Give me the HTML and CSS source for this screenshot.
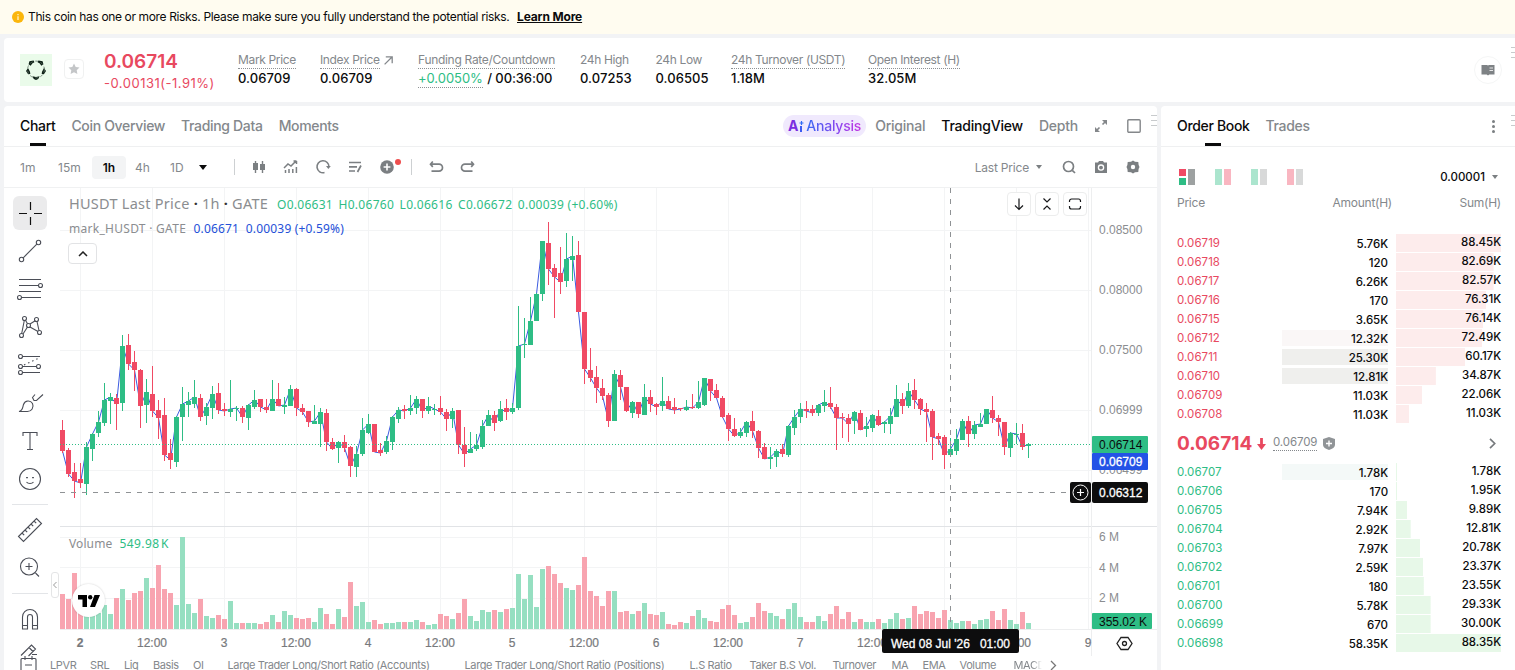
FILE: index.html
```html
<!DOCTYPE html>
<html lang="en">
<head>
<meta charset="UTF-8">
<meta name="viewport" content="width=device-width">
<title>HUSDT Perpetual</title>
<link rel="stylesheet" href="styles.css">
</head>
<body>
<div class="notice">
	<svg width="12" height="12" viewBox="0 0 12 12"><circle cx="6" cy="6" r="6" fill="#fbb60c"/><path d="M6 5.2V9M6 3v1.3" stroke="#fff3c9" stroke-width="1.3"/></svg>
	<span class="notice-text">This coin has one or more Risks. Please make sure you fully understand the potential risks.</span>
	<a class="notice-link">Learn More</a>
</div>

<div class="panel ticker">
	<div class="coin">
		<svg width="32" height="32" viewBox="0 0 32 32" fill="#0c1f14">
			<path d="M8.600 10.200l.8-3 4.200-.8.8 1.800-2.200 1.200-1.500 2.400zM23.400 10.200l-.8-3-4.200-.8-.8 1.800 2.200 1.200 1.500 2.400zM6 17l2-3 2 3.800.3 2.200-2.200.3zM26 17l-2-3-2 3.800-.3 2.200 2.200.3zM12.400 22.200l3.600.8 3.600-.8-1.400 2.700-2.200 1-2.200-1z"/>
			<circle cx="16" cy="15.500" r="8.400" fill="none" stroke="#5f7567" stroke-width=".8" stroke-dasharray="3 2.500"/>
		</svg>
	</div>
	<div class="fav"><svg width="12" height="12" viewBox="0 0 12 12"><path d="M6 .5l1.700 3.500 3.800.5-2.800 2.700.7 3.800L6 9.200 2.600 11l.7-3.800L.5 4.500 4.300 4z" fill="#c4c6c8"/></svg></div>
	<div class="last">
		<div class="last-price">0.06714</div>
		<div class="last-change">-0.00131(-1.91%)</div>
	</div>
	<div class="stats">
		<div class="stat"><span class="lbl dot">Mark Price</span><span class="val">0.06709</span></div>
		<div class="stat"><span class="lbl"><span class="lbl dot">Index Price</span> <svg width="9" height="9" viewBox="0 0 9 9" fill="none" stroke="#84888c" stroke-width="1.300"><path d="M.6 8.400L8 1M1.800.8h6.400v6.400"/></svg></span><span class="val">0.06709</span></div>
		<div class="stat"><span class="lbl dot">Funding Rate/Countdown</span><span class="val"><span class="up dot">+0.0050%</span> <span class="slash">/ 00:36:00</span></span></div>
		<div class="stat"><span class="lbl">24h High</span><span class="val">0.07253</span></div>
		<div class="stat"><span class="lbl">24h Low</span><span class="val">0.06505</span></div>
		<div class="stat"><span class="lbl dot">24h Turnover (USDT)</span><span class="val">1.18M</span></div>
		<div class="stat"><span class="lbl dot">Open Interest (H)</span><span class="val">32.05M</span></div>
	</div>
	<div class="book-btn"><svg width="14" height="12" viewBox="0 0 14 12"><path d="M.5 1H6l1 .6L8 1h5.500v9.500H8.300L7 11.600 5.700 10.500H.5z" fill="#7e8285"/><path d="M8.500 4H12M8.500 6.500H12" stroke="#e5e6e7"/></svg></div>
	<i class="grip"></i>
</div>

<div class="columns">
	<div class="panel chart-panel">
		<div class="tabs">
			<div class="tab on">Chart</div><div class="tab">Coin Overview</div><div class="tab">Trading Data</div><div class="tab">Moments</div>
			<div class="tabs-right">
				<span class="ai"><b>A</b><svg width="7" height="11" viewBox="0 0 7 11"><path d="M3 5v6" stroke="#3c5cf2" stroke-width="2"/><path d="M3.500 0v4M1.500 2h4" stroke="#2f6bf5" stroke-width="1.200"/></svg><span class="ai-text">Analysis</span></span>
				<span>Original</span><span class="sel">TradingView</span><span>Depth</span>
				<svg width="14" height="14" viewBox="0 0 14 14"><path d="M8.500 5.500l3-3M5.500 8.500l-3 3" stroke="#84878a" stroke-width="1.600"/><path d="M8 1h5v5zM1 8v5h5z" fill="#84878a"/></svg>
				<svg width="14" height="14" viewBox="0 0 14 14"><rect x=".8" y=".8" width="12.400" height="12.400" rx="1" fill="none" stroke="#84878a" stroke-width="1.400"/></svg>
			</div>
			<i class="grip"></i>
		</div>

		<div class="tools">
			<div class="frames"><span>1m</span><span>15m</span><span class="on">1h</span><span>4h</span><span>1D</span><i class="caret big"></i></div>
			<i class="bar"></i>
			<div class="tool-icons">
				<svg viewBox="0 0 16 16"><path d="M4.500 2v12M11.500 2v12" stroke="#7b7f82" stroke-width="1.400"/><path d="M2 4h5v7H2zM9 5h5v6H9z" fill="#7b7f82"/></svg>
				<svg viewBox="0 0 16 16" fill="none" stroke="#7b7f82" stroke-width="1.500"><path d="M1 9l4-4 3 2 5-5M13.500 2v3M10.500 2h3M2.500 11v3M6 10v4M9.800 10v4M13.400 8v6"/></svg>
				<svg viewBox="0 0 16 16" fill="none" stroke="#7b7f82" stroke-width="1.600"><path d="M9.500 13.600A6 6 0 1 1 14 8"/><path d="M11 7h4.800l-2.400 3z" fill="#7b7f82" stroke="none"/></svg>
				<svg viewBox="0 0 16 16" fill="none" stroke="#7b7f82" stroke-width="1.700"><path d="M2 3.500h12M2 7.800h8M2 12h6M14 6.500L10.500 13"/></svg>
				<svg viewBox="0 0 16 16"><circle cx="8" cy="8" r="6.800" fill="#7b7f82"/><path d="M8 4.600v6.800M4.600 8h6.800" stroke="#fff" stroke-width="1.600"/></svg>
			</div>
			<i class="red-dot"></i>
			<i class="bar"></i>
			<div class="tool-icons">
				<svg viewBox="0 0 16 16" fill="none" stroke="#7b7f82" stroke-width="1.700"><path d="M4.800 2.500L2.500 5.200 4.800 7.900M2.800 5.200H11a3.500 3.500 0 0 1 0 7H3.500"/></svg>
				<svg viewBox="0 0 16 16" fill="none" stroke="#7b7f82" stroke-width="1.700"><path d="M11.200 2.500l2.300 2.700-2.300 2.700M13.200 5.200H5a3.500 3.500 0 0 0 0 7h7.500"/></svg>
			</div>
			<div class="tools-right">
				<span>Last Price</span><i class="caret"></i>
				<svg viewBox="0 0 16 16" fill="none" stroke="#7b7f82" stroke-width="1.700"><circle cx="7.500" cy="7.500" r="5"/><path d="M11.300 11.300L14 14"/></svg>
				<svg viewBox="0 0 16 16"><path d="M2 3.500h3L6 2h4l1 1.500h3V14H2z" fill="#7b7f82"/><circle cx="8" cy="8.600" r="2.600" fill="none" stroke="#fff" stroke-width="1.300"/></svg>
				<svg viewBox="0 0 16 16"><path d="M8 1.500l2 1.300 3.300.2.300 3 .9 2-.9 2-.3 3-3.300.2L8 14.500l-2-1.300L2.700 13l-.3-3-.9-2 .9-2 .3-3 3.300-.2z" fill="#7b7f82"/><circle cx="8" cy="8" r="2.200" fill="#fff"/></svg>
			</div>
		</div>

		<div class="chart-body">
			<div class="draw-bar">
				<div class="dt sel"><svg viewBox="0 0 28 28"><path d="M14.500 3v8M14.500 18v8M3 14.500h8M18 14.500h8" stroke="#111" stroke-width="1.200"/></svg></div>
				<div class="dt"><svg viewBox="0 0 28 28"><circle cx="5.500" cy="22.500" r="2.200"/><circle cx="22.500" cy="5.500" r="2.200"/><path d="M7.200 20.800L20.800 7.200"/></svg></div>
				<div class="dt"><svg viewBox="0 0 28 28"><path d="M3 4.500h22M3 10.500h19.800M3 16.500h22M5.500 22.500H25"/><circle cx="24.500" cy="10.500" r="2"/><circle cx="3.500" cy="22.500" r="2"/></svg></div>
				<div class="dt"><svg viewBox="0 0 28 28"><circle cx="8.500" cy="5.500" r="2"/><circle cx="5.500" cy="22.500" r="2"/><circle cx="20.500" cy="6.500" r="2"/><circle cx="23.500" cy="19.500" r="2"/><circle cx="12.500" cy="12.500" r="2"/><path d="M8.300 7.500l-2.600 13M9.500 7.300l2 3.500M14 11l5.200-3.200M21 8.500l2 9M14 14l8 4.500M7 21l4.500-7"/></svg></div>
				<div class="dt"><svg viewBox="0 0 28 28"><path d="M6.500 5.500H24M6.500 15.500h14M6.500 21.500H24"/><path d="M8 14l15-7" stroke-dasharray="1.500 3"/><circle cx="4.500" cy="5.500" r="2"/><circle cx="4.500" cy="15.500" r="2"/><circle cx="22.500" cy="15.500" r="2"/><circle cx="4.500" cy="21.500" r="2"/></svg></div>
				<div class="dt"><svg viewBox="0 0 28 28"><path d="M3 22.500c4-1 3.500-4 4.500-7 1.500-4.500 7-4.500 9-1 1.800 4-1 8-5 8zM27 5.500l-6.500 6h-2.500l-1.500-3 2.500-3"/></svg></div>
				<div class="dt"><svg viewBox="0 0 28 28"><path d="M7 9V5.500h14V9M14 5.500v17M11 22.500h6"/></svg></div>
				<div class="dt"><svg viewBox="0 0 28 28"><circle cx="14" cy="14" r="10.500"/><path d="M10.500 17c1.500 2 5.500 2 7 0"/><path d="M11 12v1.200M17 12v1.200" stroke-width="1.800"/></svg></div>
				<i class="rule"></i>
				<div class="dt"><svg viewBox="0 0 28 28"><path d="M2.500 20.500l18-18 5 5-18 18zM6 17l2.200 2.200M9 14l2.200 2.200M12 11l2.200 2.200M15 8l2.200 2.200M18 5l2.200 2.200"/></svg></div>
				<div class="dt"><svg viewBox="0 0 28 28"><circle cx="13" cy="13.500" r="8.500"/><path d="M13 10v7M9.500 13.500h7M19.500 20l3.500 3.500"/></svg></div>
				<i class="rule two"></i>
				<div class="dt"><svg viewBox="0 0 28 28"><path d="M6.500 24V12a7.500 7.500 0 0 1 15 0v12h-5V12a2.500 2.500 0 0 0-5 0v12zM6.500 20.500h5M16.500 20.500h5"/></svg></div>
				<div class="dt"><svg viewBox="0 0 28 28"><path d="M5 13.500L15.500 3l4 4-7 7M16 12.500h5M13 5.500l4 4M6 16.500h13a1 1 0 0 1 1 1V28M6 16.500a1 1 0 0 0-1 1V28M9 14v4M16 14v4M9 23h7"/></svg></div>
			</div>

			<div class="chart-main">
				<svg id="chart" width="1104" height="468" viewBox="53 188 1104 468"></svg>
				<div class="legend">
					<div class="lg1"><span class="nm">HUSDT Last Price <b>·</b> 1h <b>·</b> GATE</span><span class="ohlc"><i>O</i>0.06631</span><span class="ohlc"><i>H</i>0.06760</span><span class="ohlc"><i>L</i>0.06616</span><span class="ohlc"><i>C</i>0.06672</span><span class="ohlc">0.00039 (+0.60%)</span></div>
					<div class="lg2">mark_HUSDT · GATE <span>0.06671&nbsp; 0.00039 (+0.59%)</span></div>
					<div class="fold"><svg width="10" height="6" viewBox="0 0 10 6"><path d="M1 5l4-4 4 4" fill="none" stroke="#222" stroke-width="1.500"/></svg></div>
				</div>
				<div class="vol-legend">Volume <span>549.98&#8202;K</span></div>
				<div class="pane-btns">
					<span><svg viewBox="0 0 14 14"><path d="M7 1.500v11M3 8.500l4 4 4-4"/></svg></span>
					<span><svg viewBox="0 0 14 14"><path d="M3.500 1.500L7 5l3.500-3.500M3.500 12.500L7 9l3.500 3.500"/></svg></span>
					<span><svg viewBox="0 0 14 14"><path d="M1.500 5V4a2 2 0 0 1 2-2h7a2 2 0 0 1 2 2v1M1.500 9v1a2 2 0 0 0 2 2h7a2 2 0 0 0 2-2V9"/></svg></span>
				</div>
				<div class="tv-logo"><svg width="22" height="12" viewBox="0 0 22 12"><path d="M0 0h9v12H4.500V4.500H0zM16.500 0H22l-5 12h-5z"/><circle cx="12.200" cy="2.200" r="2.200"/></svg></div>
				<div class="side-tab"><svg width="4" height="8" viewBox="0 0 4 8"><path d="M3.500 1l-3 3 3 3" fill="none" stroke="#999"/></svg></div>
				<div class="indicators">
					<span>LPVR</span><span>SRL</span><span>Liq</span><span>Basis</span><span>OI</span><span>Large Trader Long/Short Ratio (Accounts)</span><span>Large Trader Long/Short Ratio (Positions)</span><span>L.S Ratio</span><span>Taker B.S Vol.</span><span>Turnover</span><span>MA</span><span>EMA</span><span>Volume</span><span class="fade">MACD</span>
					<svg width="7" height="11" viewBox="0 0 7 11"><path d="M1 1l4.500 4.500L1 10" fill="none" stroke="#777" stroke-width="1.300"/></svg>
				</div>
			</div>
		</div>
	</div>

	<div class="panel book-panel">
		<div class="tabs book-tabs">
			<div class="tab on">Order Book</div><div class="tab">Trades</div>
			<div class="dots"><i></i><i></i><i></i></div>
			<i class="grip"></i>
		</div>
		<div class="book-modes">
			<svg width="16" height="16" viewBox="0 0 16 16"><path d="M0 0h7v7H0z" fill="#f04a64"/><path d="M0 9h7v7H0z" fill="#2ebd85"/><path d="M9 0h7v16H9z" fill="#9da1a1"/></svg>
			<svg width="16" height="16" viewBox="0 0 16 16"><path d="M0 0h7v16H0z" fill="#abe5ce"/><path d="M9 0h7v16H9z" fill="#f9b6c1"/></svg>
			<svg width="16" height="16" viewBox="0 0 16 16"><path d="M0 0h7v16H0z" fill="#abe5ce"/><path d="M9 0h7v16H9z" fill="#d8d9d9"/></svg>
			<svg width="16" height="16" viewBox="0 0 16 16"><path d="M0 0h7v16H0z" fill="#f9b6c1"/><path d="M9 0h7v16H9z" fill="#d8d9d9"/></svg>
			<div class="step">0.00001 <i class="caret"></i></div>
		</div>
		<div class="book-head"><span>Price</span><span>Amount(H)</span><span>Sum(H)</span></div>
		<div id="asks" class="rows asks"></div>
		<div class="mid">
			<span class="mid-price">0.06714</span>
			<svg width="9" height="12" viewBox="0 0 9 12"><path d="M4.500 0v8" stroke="#e8495f" stroke-width="2.800"/><path d="M0 6h9L4.500 12z" fill="#e8495f"/></svg>
			<span class="mid-mark">0.06709</span>
			<svg width="12" height="13" viewBox="0 0 12 13"><path d="M6 0l6 2v6c0 2-2.500 4-6 5-3.500-1-6-3-6-5V2z" fill="#909497"/><path d="M6 3.500v6M3 6.500h6" stroke="#fff" stroke-width="1.400"/></svg>
			<svg class="go" width="7" height="11" viewBox="0 0 7 11"><path d="M1 .8l4.700 4.700L1 10.200" fill="none" stroke="#777b7e" stroke-width="1.700"/></svg>
		</div>
		<div id="bids" class="rows bids"></div>
	</div>
</div>
<script src="chart.js"></script>
</body>
</html>
```
FILE: styles.css
```css
* { box-sizing: border-box; }
body {
	margin: 0;
	width: 1515px;
	height: 670px;
	overflow: hidden;
	background: #f2f3f5;
	font-family: Inter, "Liberation Sans", sans-serif;
	font-size: 12px;
	color: #0b0b0c;
}
i { font-style: normal; }
svg { display: block; flex: none; }
.panel { background: #fff; position: relative; }
.up { color: #2ebd85; }

/* notice */
.notice {
	height: 34px;
	background: #fffcf0;
	display: flex;
	align-items: center;
	padding: 0 0 1px 12px;
}
.notice-text { margin-left: 4px; width: 489px; white-space: nowrap; letter-spacing: -0.36px; }
.notice-link { font-weight: 700; text-decoration: underline; letter-spacing: -0.15px; }

/* ticker */
.ticker {
	margin: 4px 0 0 4px;
	height: 64px;
	border-radius: 4px 0 0 4px;
	display: flex;
	align-items: center;
	padding-left: 16px;
}
.coin { width: 32px; height: 32px; background: #eafbea; }
.fav {
	width: 20px;
	height: 20px;
	margin: -3px 0 0 12px;
	border: 1px solid #f0f1f1;
	border-radius: 4px;
	display: flex;
	align-items: center;
	justify-content: center;
}
.last { width: 134px; margin: 4px 0 0 20px; color: #e8495f; }
.last-price { font-size: 19px; font-weight: 600; line-height: 22px; }
.last-change { font-size: 13px; line-height: 20px; letter-spacing: 0.5px; }
.stats {
	display: grid;
	grid-template-columns: 82px 98px 162px 75.500px 75.500px 137px 120px;
	white-space: nowrap;
}
.stat { display: flex; flex-direction: column; align-items: flex-start; height: 36px; }
.lbl { color: #84888c; font-size: 12px; line-height: 16px; letter-spacing: -0.35px; display: inline-flex; gap: 4px; align-items: center; }
.dot { border-bottom: 1px dotted #8d9194; }
.val { font-size: 13px; line-height: 18px; font-weight: 500; letter-spacing: 0.05px; }
.lbl:not(.dot) + .val { margin-top: 1px; }
.stat:nth-child(2) .val { margin-top: 0; }
.stat:nth-child(3) .lbl { letter-spacing: -0.3px; }
.val .dot { font-weight: 400; display: inline-block; line-height: 17px; letter-spacing: -0.05px; }
.slash { margin-left: 1px; letter-spacing: -0.1px; }
.book-btn {
	width: 28px;
	height: 28px;
	margin-left: auto;
	margin-right: 13px;
	border: 1px solid #f5f6f6;
	border-radius: 50%;
	display: flex;
	align-items: center;
	justify-content: center;
}
/* drag handle on top of the panel corner */
.grip {
	position: absolute;
	top: 9px;
	right: 0;
	width: 6px;
	height: 11px;
	border-top: 1px solid #c8cbcd;
	border-bottom: 1px solid #c8cbcd;
}
.grip::after { content: ""; display: block; margin-top: 4px; border-top: 1px solid #c8cbcd; }
.ticker .grip { right: -2px; }
.book-tabs .grip { right: -2px; }

/* columns */
.columns { display: flex; gap: 4px; margin: 4px 0 0 4px; height: 564px; }
.chart-panel { width: 1153px; border-radius: 4px 4px 0 0; display: flex; flex-direction: column; }
.book-panel { width: 354px; border-radius: 4px 0 0 0; }
.tabs {
	position: relative;
	height: 41px;
	border-bottom: 1px solid #eff0f1;
	display: flex;
	padding-left: 16px;
	gap: 16px;
	font-size: 14px;
	font-weight: 500;
	color: #84888c;
	line-height: 40px;
	white-space: nowrap;
	letter-spacing: -0.33px;
}
.tab.on {
	color: #0b0b0c;
	background: linear-gradient(#0b0b0c, #0b0b0c) center 37px / 16px 3px no-repeat;
}
.tabs-right {
	margin-left: auto;
	margin-right: 16px;
	display: flex;
	align-items: center;
	gap: 16px;
	letter-spacing: -0.22px;
}
.tabs-right .sel { color: #0b0b0c; }
.ai {
	height: 22px;
	line-height: 22px;
	margin-right: -7px;
	padding: 0 5px;
	border-radius: 11px;
	background: #f0e9fd;
	display: flex;
	align-items: center;
}
.ai b { color: #7a2ee0; }
.ai-text {
	margin-left: 1px;
	background: linear-gradient(90deg, #3769f3, #8b45ef 60%, #c436e0);
	-webkit-background-clip: text;
	background-clip: text;
	color: transparent;
}
.tabs-right svg + svg { margin-left: 3px; }

.tools {
	height: 41px;
	border-bottom: 1px solid #f0f1f2;
	display: flex;
	align-items: center;
	padding-left: 16px;
	color: #84888c;
}
.frames {
	display: grid;
	grid-template-columns: 38px 34px 35px 34px 30px 10px;
	align-items: center;
}
.frames .on {
	background: #f3f4f5;
	border-radius: 4px;
	width: 34px;
	height: 23px;
	line-height: 23px;
	text-align: center;
	color: #0b0b0c;
	font-weight: 600;
}
.frames span:nth-child(4) { padding-left: 8px; }
.frames span:nth-child(5) { padding-left: 9px; }
.caret { display: inline-block; border: 3px solid transparent; border-top: 4px solid #7b7f82; border-bottom: 0; }
.caret.big { border-width: 5px 4px 0; border-top-color: #0b0b0c; margin-left: 8px; width: 8px; }
.bar { width: 1px; height: 16px; background: #cdd0d2; }
.frames + .bar { margin-left: 33px; }
.tool-icons { display: flex; gap: 16px; margin-left: 16px; }
.tool-icons svg, .tools-right svg { width: 16px; height: 16px; }
.red-dot { width: 6px; height: 6px; border-radius: 50%; background: #ee4d4d; margin: -11px 10px 0 0; }
.tools-right { margin-left: auto; margin-right: 16px; display: flex; align-items: center; gap: 16px; letter-spacing: -0.2px; }
.tools-right .caret { margin: 0 3px 0 -9px; }

/* drawing tools */
.chart-body { display: flex; flex: 1; min-height: 0; overflow: hidden; }
.draw-bar {
	width: 49px;
	padding: 8px 0 0 9px;
	display: flex;
	flex-direction: column;
}
.dt {
	width: 34px;
	height: 34px;
	margin-bottom: 4px;
	border-radius: 6px;
	display: flex;
	align-items: center;
	justify-content: center;
	flex: none;
}
.dt.sel { background: #ebebec; }
.dt svg { width: 28px; height: 28px; fill: none; stroke: #4b4e57; stroke-width: 1.1; }
.rule { width: 36px; height: 1px; margin: 4px 0 8px -1px; background: #e3e5e8; flex: none; }
.rule + .dt { margin-bottom: 3px; }
.rule.two { margin: 5px 0 8px -1px; }

/* chart */
.chart-main { position: relative; width: 1104px; font-family: "Noto Sans", "Open Sans", sans-serif; }
.candle-text { font-family: "Liberation Sans", Arial, sans-serif; font-size: 12px; }
.legend { position: absolute; left: 16px; top: 4px; color: #8b8d90; white-space: nowrap; }
.lg1 { display: flex; align-items: baseline; font-size: 13px; line-height: 22px; }
.nm { font-size: 14.5px; width: 208px; letter-spacing: 0.25px; }
.nm b { color: #333; }
.ohlc { color: #2ebd85; font-size: 12px; margin-right: 5.5px; letter-spacing: 0.28px; }
.lg2 { font-size: 12px; line-height: 18px; margin-top: 4px; letter-spacing: 0.28px; }
.lg2 span { color: #2450d8; margin-left: 4px; letter-spacing: 0.18px; }
.fold {
	width: 29px;
	height: 21px;
	margin-top: 5px;
	margin-left: -1px;
	border: 1px solid #e2e3e5;
	border-radius: 4px;
	background: #fff;
	display: flex;
	align-items: center;
	justify-content: center;
}
.vol-legend { position: absolute; left: 16px; top: 347px; color: #8b8d90; font-size: 12px; line-height: 18px; letter-spacing: 0.1px; }
.vol-legend span { color: #2ebd85; margin-left: 4px; letter-spacing: 0.4px; }
.pane-btns { position: absolute; left: 954px; top: 4px; display: flex; gap: 4px; }
.pane-btns span {
	width: 24px;
	height: 24px;
	border: 1px solid #eceded;
	border-radius: 4px;
	background: #fff;
	display: flex;
	align-items: center;
	justify-content: center;
}
.pane-btns svg { width: 14px; height: 14px; fill: none; stroke: #17181a; stroke-width: 1.2; }
.tv-logo {
	position: absolute;
	left: 19px;
	top: 396px;
	width: 33px;
	height: 33px;
	border-radius: 50%;
	background: #fff;
	box-shadow: 0 0 2px rgba(0, 0, 0, 0.2);
	display: flex;
	align-items: center;
	justify-content: center;
}
.side-tab {
	position: absolute;
	left: -2px;
	top: 384px;
	width: 8px;
	height: 26px;
	border: 1px solid #e4e5e6;
	border-radius: 3px;
	background: #fff;
	display: flex;
	align-items: center;
	justify-content: center;
}
.indicators {
	display: grid;
	grid-template-columns: 40px 34px 29px 40px 34.500px 237px 225px 60px 83px 59px 31px 37px 54px 36px 8px;
	margin-left: -3px;
	padding-top: 2px;
	font: 11px/14px Inter, "Liberation Sans", sans-serif;
	letter-spacing: -0.38px;
	color: #84888c;
	white-space: nowrap;
}
.indicators .fade {
	width: 28px;
	overflow: hidden;
	-webkit-mask-image: linear-gradient(90deg, #000 65%, transparent);
	mask-image: linear-gradient(90deg, #000 65%, transparent);
}
.indicators svg { margin-top: 2px; }

/* order book */
.dots { margin-left: auto; margin-right: 20px; display: flex; flex-direction: column; gap: 2px; justify-content: center; }
.dots i { width: 3px; height: 3px; border-radius: 50%; background: #7b7f82; }
.book-modes { display: flex; gap: 20px; padding: 22px 17px 0 18px; align-items: center; }
.step { margin-left: auto; font-weight: 500; font-size: 11.5px; }
.step .caret { margin: 0 0 2px 4px; }
.book-head {
	display: grid;
	grid-template-columns: 100px 115px 109px;
	padding: 10px 0 0 16px;
	line-height: 16px;
	letter-spacing: -0.25px;
	color: #84888c;
}
.book-head span + span, .row span + span { text-align: right; }
.asks { margin-top: 23px; }
.row {
	display: grid;
	grid-template-columns: 105px 106px 8px 105px;
	padding-left: 16px;
	height: 19px;
	font-size: 11.5px;
	font-weight: 500;
}
.row .price { letter-spacing: 0.05px; line-height: 19px; font-weight: 400; }
.row .amount { grid-column: 2; height: 16px; margin: 1px 0 2px; line-height: 18px; letter-spacing: -0.05px; }
.row .sum { grid-column: 4; height: 18px; line-height: 17px; letter-spacing: -0.05px; background-repeat: no-repeat; }
.asks .price { color: #e8495f; }
.bids .price { color: #2ebd85; }
.asks .sum { background-image: linear-gradient(#fdecec, #fdecec); }
.bids .sum { background-image: linear-gradient(#e7f8e8, #e7f8e8); }
.amount.red { background: #faf7f7; }
.amount.grey { background: #efefed; }
.amount.green { background: #f4f9f8; }
.mid { height: 39px; display: flex; align-items: center; padding: 0 19px 0 16px; }
.mid-price { width: 80px; font-size: 19px; font-weight: 700; color: #e8495f; }
.mid-mark { margin: -3px 6px 0 7px; font-size: 11.5px; letter-spacing: -0.1px; color: #84888c; border-bottom: 1px dotted #84888c; line-height: 16px; }
.go { margin-left: auto; }
```
FILE: chart.js
```js
// one line per candle: direction high top bottom low volume (pixels on the pane)
var candles = [
"R 420 430 451 453 35","R 448 450 474 477 30","R 463 472 481 498 56","R 463 479 483 488 20","G 442 447 484 495 14",
"G 433 434 449 461 14","G 411 422 433 437 16","G 383 400 423 426 24","G 393 397 401 424 15","R 394 398 404 430 31",
"G 335 346 403 411 40","R 334 345 364 370 29","R 351 362 370 391 36","R 369 370 406 428 38","G 379 392 405 423 51",
"R 366 394 411 417 41","R 400 410 418 439 64","R 398 415 455 461 40","R 439 453 460 469 36","G 416 417 462 467 24",
"G 387 404 417 441 92","G 392 401 405 417 25","G 380 397 404 408 16","R 394 398 417 421 30","G 403 407 416 425 13",
"G 386 394 408 419 11","R 383 393 410 414 14","R 403 409 411 416 10","G 380 409 412 417 28","G 406 408 409 421 6",
"R 406 408 417 423 6","G 404 405 418 430 6","G 390 400 407 409 6","R 399 399 407 412 5","R 399 407 410 413 7",
"G 380 399 411 411 14","R 383 399 406 406 7","G 397 405 407 414 18","G 385 389 406 406 14","R 388 389 408 416 11",
"R 404 408 412 415 10","R 411 411 422 427 11","G 405 421 424 424 7","G 408 412 424 447 21","R 409 413 442 451 15",
"R 438 442 449 450 5","G 441 442 448 463 20","R 435 442 448 452 12","R 446 447 466 477 47","G 446 454 467 477 23",
"G 418 430 454 456 27","G 414 424 433 434 7","R 424 424 452 452 9","R 443 450 453 456 5","G 436 441 452 454 6",
"G 416 417 442 450 6","G 407 410 419 423 7","R 405 409 411 419 7","G 395 408 411 415 7","G 396 399 408 414 9",
"R 399 399 411 418 7","G 397 406 411 414 4","G 404 409 410 415 5","R 396 408 412 415 15","R 409 412 419 431 13",
"G 408 411 419 428 10","R 410 410 445 454 16","R 427 445 454 467 30","G 432 449 453 453 13","G 434 445 449 451 8",
"G 420 426 447 449 19","G 410 415 426 426 17","R 411 415 423 431 19","G 401 409 421 422 17","R 399 408 412 420 20",
"G 403 408 412 414 21","G 306 346 408 410 55","G 318 344 345 358 30","G 297 321 345 345 54","G 293 294 321 321 22",
"G 241 241 294 301 60","R 222 243 269 285 63","R 264 268 277 318 55","R 247 273 282 294 46","G 233 259 281 287 41",
"G 236 256 260 281 39","R 241 255 312 312 44","R 312 312 369 384 72","R 348 370 378 382 38","R 366 377 388 403 33",
"R 379 388 396 400 23","R 393 395 421 427 38","G 370 374 421 421 38","R 370 375 387 400 17","R 387 387 411 412 18",
"G 401 402 413 418 15","R 402 402 414 418 18","G 384 397 415 415 26","R 390 397 404 412 15","R 403 404 407 415 14",
"G 377 401 406 411 17","R 396 401 409 409 5","R 398 407 410 414 4","R 408 408 409 411 7","G 400 407 410 411 6",
"R 394 407 408 409 13","G 381 402 408 409 19","G 378 378 405 406 11","R 379 379 391 401 8","R 384 390 398 398 7",
"R 396 398 417 418 20","R 413 415 429 441 24","R 418 429 436 437 14","G 428 432 436 438 6","G 421 422 433 437 7",
"R 411 421 431 438 12","R 430 431 448 458 26","R 443 447 459 459 18","G 447 457 459 469 16","G 449 451 457 467 13",
"R 444 449 454 457 10","G 425 426 455 457 20","G 410 417 428 435 26","G 403 409 417 423 12","R 401 409 411 418 7",
"R 405 409 413 416 7","G 404 405 413 416 13","G 390 402 406 412 8","R 387 403 407 409 15","R 404 407 418 450 23",
"R 413 417 418 438 10","R 414 418 424 442 17","G 411 412 421 434 7","R 410 413 430 430 10","G 417 426 429 437 7",
"G 414 415 428 432 7","R 410 416 425 426 10","G 421 422 424 433 6","G 408 416 424 434 10","G 385 399 417 417 16",
"R 393 399 406 414 10","G 383 391 406 408 11","R 379 390 400 409 23","R 398 399 409 415 15","R 403 409 412 442 18",
"R 409 411 437 460 17","R 433 436 439 445 11","R 435 437 455 469 19","G 438 449 455 457 9","G 429 439 451 455 6",
"G 419 421 440 440 8","R 416 421 434 447 8","G 421 425 434 439 5","G 413 424 427 427 9","G 409 409 424 424 10",
"R 396 410 418 423 18","R 415 418 422 436 9","R 422 422 447 455 20","G 432 433 448 457 9","G 423 434 435 444 5",
"R 424 433 447 450 17","G 443 444 446 458 6"
];

var UP = '#2ebd85', DOWN = '#f04a64';
var out = [];

function rect(x, y, w, h, fill, extra) {
	out.push('<rect x="' + x + '" y="' + y + '" width="' + w + '" height="' + h + '" fill="' + fill + '" ' + (extra || '') + '/>');
}
function text(x, y, s, fill, extra) {
	out.push('<text class="candle-text" x="' + x + '" y="' + y + '" fill="' + fill + '" ' + (extra || '') + '>' + s + '</text>');
}

function drawChart() {
	var i, x, c, line = '';

	// grid
	for (i = 0; i < 15; i++) rect(80 + i * 72, 188, 1, 441, '#f3f4f5');
	[230, 290, 350, 410, 470, 537, 567, 598].forEach(function (y) { rect(60, y, 1031, 1, '#f3f4f5'); });
	rect(60, 526, 1097, 1, '#e1e3e6');
	rect(60, 629, 1097, 1, '#edeeef');
	rect(1091, 188, 1, 468, '#edeeef');

	// volume and mark price line go under the candles
	for (i = 0; i < candles.length; i++) {
		c = candles[i].split(' ');
		x = 60 + i * 6;
		rect(x, 629 - c[5], 5, c[5], c[0] == 'G' ? '#96dfc1' : '#f8a4b0');
		line += (i ? 'L' : 'M') + (x + 2.5) + ' ' + (c[0] == 'G' ? c[2] : c[3]);
	}
	out.push('<path d="' + line + '" fill="none" stroke="#3c5be0"/>');
	for (i = 0; i < candles.length; i++) {
		c = candles[i].split(' ');
		x = 60 + i * 6;
		var col = c[0] == 'G' ? UP : DOWN;
		rect(x + 2, c[1], 1, c[4] - c[1], col);
		rect(x, c[2], 5, Math.max(1, c[3] - c[2]), col);
	}

	// last price and crosshair
	out.push('<path d="M60 444.500H1092" stroke="' + UP + '" stroke-dasharray="1 2"/>');
	out.push('<path d="M60 492.500H1070M950.500 188V629" stroke="#8f9295" stroke-dasharray="5 6" fill="none"/>');

	// price scale
	text(1099, 234, '0.08500', '#8b8d90');
	text(1099, 294, '0.08000', '#8b8d90');
	text(1099, 354, '0.07500', '#8b8d90');
	text(1099, 414, '0.06999', '#8b8d90');
	text(1099, 474, '0.06499', '#8b8d90');
	text(1099, 541, '6 M', '#8b8d90');
	text(1099, 572, '4 M', '#8b8d90');
	text(1099, 602, '2 M', '#8b8d90');
	rect(1092, 436, 56, 17, UP, 'rx="1"');
	text(1099, 449, '0.06714', '#0b0b0c');
	rect(1092, 453, 56, 17, '#2352e6', 'rx="1"');
	text(1099, 466, '0.06709', '#fff', 'stroke="#fff" stroke-width=".3"');
	rect(1070, 482, 21, 21, '#0d0d0e', 'rx="2"');
	rect(1092, 482, 56, 21, '#0d0d0e', 'rx="2"');
	out.push('<circle cx="1080.500" cy="492.500" r="7.500" fill="none" stroke="#fff"/><path d="M1080.500 489v7M1077 492.500h7" stroke="#fff" stroke-width="1.200"/>');
	text(1099, 497, '0.06312', '#fff', 'stroke="#fff" stroke-width=".3"');
	rect(1092, 613, 60, 16, UP, 'rx="1"');
	text(1099, 626, '355.02 K', '#0b0b0c');

	// time scale
	for (i = 0; i < 15; i++) {
		var day = i % 2 == 0;
		text(80 + i * 72, 647, day ? String(2 + i / 2) : '12:00', '#77797c', 'text-anchor="middle" stroke="#77797c" stroke-width=".2"' + (i == 0 ? ' font-weight="bold"' : ''));
	}
	rect(882, 629, 137, 24, '#0d0d0e', 'rx="2"');
	text(891, 648, "Wed 08 Jul '26 &#160; 01:00", '#fff', 'stroke="#fff" stroke-width=".3" textLength="119"');
	out.push('<path d="M1121 637.500h7l4 6-4 6h-7l-4-6z" fill="none" stroke="#222" stroke-width="1.300"/><circle cx="1124.500" cy="643.500" r="2" fill="none" stroke="#222" stroke-width="1.300"/>');

	document.getElementById('chart').innerHTML = out.join('');
}

// price, amount, sum, depth in percent, amount highlight
var asks = [
	['0.06719', '5.76K', '88.45K', 100], ['0.06718', '120', '82.69K', 93], ['0.06717', '6.26K', '82.57K', 93],
	['0.06716', '170', '76.31K', 86], ['0.06715', '3.65K', '76.14K', 83], ['0.06712', '12.32K', '72.49K', 82, 'red'],
	['0.06711', '25.30K', '60.17K', 66, 'grey'], ['0.06710', '12.81K', '34.87K', 38, 'grey'],
	['0.06709', '11.03K', '22.06K', 25], ['0.06708', '11.03K', '11.03K', 12.5]
];
var bids = [
	['0.06707', '1.78K', '1.78K', 1, 'green'], ['0.06706', '170', '1.95K', 1], ['0.06705', '7.94K', '9.89K', 10.5],
	['0.06704', '2.92K', '12.81K', 14], ['0.06703', '7.97K', '20.78K', 23], ['0.06702', '2.59K', '23.37K', 26],
	['0.06701', '180', '23.55K', 26.5], ['0.06700', '5.78K', '29.33K', 33], ['0.06699', '670', '30.00K', 33],
	['0.06698', '58.35K', '88.35K', 100]
];
function drawRows(id, rows) {
	document.getElementById(id).innerHTML = rows.map(function (r) {
		return '<div class="row"><span class="price">' + r[0] + '</span><span class="amount ' + (r[4] || '') + '">' + r[1] +
			'</span><span class="sum" style="background-size:' + r[3] + '% 100%">' + r[2] + '</span></div>';
	}).join('');
}

drawChart();
drawRows('asks', asks);
drawRows('bids', bids);
```
